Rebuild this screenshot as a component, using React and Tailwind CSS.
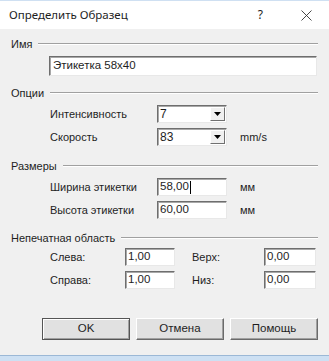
import React from "react";

const sunken =
  "bg-white border border-t-[#6e6e6e] border-l-[#6e6e6e] border-b-[#e8e8e8] border-r-[#e8e8e8] shadow-[inset_1px_1px_0_#a8a8a8]";

function Group({ label, children }) {
  return (
    <div>
      <div className="flex items-center h-[14px]">
        <span className="pl-[11px] pr-[6px] leading-none">{label}</span>
        <div className="flex-1 mr-[11px] h-[2px] border-t border-t-[#a0a0a0] border-b border-b-white" />
      </div>
      {children}
    </div>
  );
}

function Combo({ value }) {
  return (
    <div className={`w-[70px] h-[18px] flex items-center ${sunken}`}>
      <span className="flex-1 pl-[2px] leading-none text-[12px]">{value}</span>
      <div className="w-[15px] h-[14px] mr-[1px] bg-[#f0f0f0] border border-t-white border-l-white border-b-[#707070] border-r-[#707070] flex items-center justify-center">
        <svg width="7" height="4" viewBox="0 0 7 4">
          <polygon points="0,0 7,0 3.5,4" fill="#000" />
        </svg>
      </div>
    </div>
  );
}

function Field({ value, w, cursor }) {
  return (
    <div className={`h-[18px] flex items-center ${sunken}`} style={{ width: w }}>
      <span className="pl-[2px] leading-none text-[11.5px]">{value}</span>
      {cursor && <span className="w-px h-[13px] bg-black ml-[1px]" />}
    </div>
  );
}

function Button({ children, def }) {
  return (
    <div
      className={`w-[88px] h-[22px] flex items-center justify-center bg-[#e1e1e1] text-[11.5px] ${
        def
          ? "border border-[#555] shadow-[inset_1px_1px_0_#fff,inset_-1px_-1px_0_#a0a0a0]"
          : "border border-t-white border-l-white border-b-[#6a6a6a] border-r-[#6a6a6a] shadow-[inset_-1px_-1px_0_#a0a0a0]"
      }`}
    >
      {children}
    </div>
  );
}

export default function App() {
  return (
    <div
      className="w-[329px] h-[361px] bg-[#f0f0f0] text-[11px] text-[#1e1e1e] flex flex-col overflow-hidden"
      style={{ fontFamily: '"Liberation Sans", Arial, sans-serif' }}
    >
      {/* Title bar */}
      <div className="h-[29px] bg-white border-t border-t-[#cfe0f2] flex items-center shrink-0">
        <span className="pl-[9px] text-[11.5px] flex-1" style={{ fontFamily: '"Noto Sans", sans-serif' }}>
          Определить Образец
        </span>
        <span className="text-[12px] mr-[38px]" style={{ fontFamily: '"Noto Sans", sans-serif' }}>?</span>
        <svg width="11" height="11" viewBox="0 0 11 11" className="mr-[17px]">
          <line x1="0.5" y1="0.5" x2="10.5" y2="10.5" stroke="#333" strokeWidth="0.9" />
          <line x1="10.5" y1="0.5" x2="0.5" y2="10.5" stroke="#333" strokeWidth="0.9" />
        </svg>
      </div>

      <div className="flex flex-col pt-[8px]">
        <Group label="Имя">
          <div className="pl-[49px] pr-[12px] mt-[5px]">
            <div className={`h-[20px] flex items-center ${sunken}`}>
              <span className="pl-[3px] text-[11.5px] leading-none">Этикетка 58x40</span>
            </div>
          </div>
        </Group>

        <div className="mt-[10px]">
          <Group label="Опции">
            <div className="flex flex-col gap-[5px] mt-[5px]">
              <div className="flex items-center">
                <span className="pl-[50px] w-[157px]">Интенсивность</span>
                <Combo value="7" />
              </div>
              <div className="flex items-center">
                <span className="pl-[50px] w-[157px]">Скорость</span>
                <Combo value="83" />
                <span className="ml-[13px]">mm/s</span>
              </div>
            </div>
          </Group>
        </div>

        <div className="mt-[13px]">
          <Group label="Размеры">
            <div className="flex flex-col gap-[5px] mt-[5px]">
              <div className="flex items-center">
                <span className="pl-[50px] w-[157px]">Ширина этикетки</span>
                <Field value="58,00" w="70px" cursor />
                <span className="ml-[13px]">мм</span>
              </div>
              <div className="flex items-center">
                <span className="pl-[50px] w-[157px]">Высота этикетки</span>
                <Field value="60,00" w="70px" />
                <span className="ml-[13px]">мм</span>
              </div>
            </div>
          </Group>
        </div>

        <div className="mt-[12px]">
          <Group label="Непечатная область">
            <div className="flex flex-col gap-[5px] mt-[3px]">
              <div className="flex items-center">
                <span className="pl-[50px] w-[125px]">Слева:</span>
                <Field value="1,00" w="50px" />
                <span className="pl-[17px] w-[89px]">Верх:</span>
                <Field value="0,00" w="52px" />
              </div>
              <div className="flex items-center">
                <span className="pl-[50px] w-[125px]">Справа:</span>
                <Field value="1,00" w="50px" />
                <span className="pl-[17px] w-[89px]">Низ:</span>
                <Field value="0,00" w="52px" />
              </div>
            </div>
          </Group>
        </div>

        <div className="flex gap-[6px] pl-[42px] mt-[29px]">
          <Button def>OK</Button>
          <Button>Отмена</Button>
          <Button>Помощь</Button>
        </div>
      </div>

      <div className="mt-auto h-[6px] bg-[#cde0f3] border-t border-t-[#9bb8d6] shrink-0" />
    </div>
  );
}
